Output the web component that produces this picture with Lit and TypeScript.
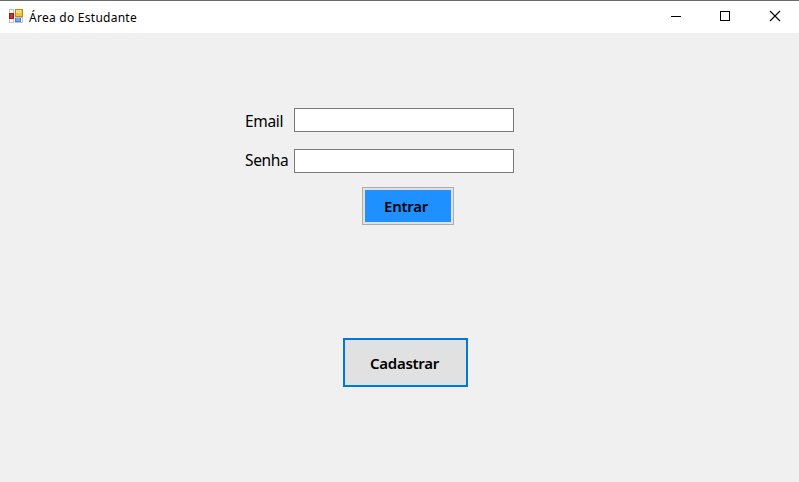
import { LitElement, html, css, svg } from "lit";
import { customElement, property } from "lit/decorators.js";

@customElement("title-bar")
class TitleBar extends LitElement {
  @property() caption = "";

  static styles = css`
    :host {
      display: flex;
      box-sizing: border-box;
      height: 33px;
      background: #fff;
      border-top: 1px solid #6b6a6c;
      color: #000;
      flex: none;
    }
    .app-icon {
      display: block;
      margin: 8px 6px 0 9px;
      flex: none;
    }
    .caption {
      flex: 1;
      font-size: 12px;
      line-height: 16px;
      padding-top: 9px;
      white-space: nowrap;
      letter-spacing: 0.26px;
    }
    .control {
      display: block;
      width: 50px;
      height: 32px;
      flex: none;
    }
  `;

  private control(shape: unknown) {
    return html`<svg class="control" viewBox="0 0 50 32" fill="none" stroke="#000">${shape}</svg>`;
  }

  render() {
    return html`
      <svg class="app-icon" width="14" height="14" viewBox="0 0 14 14" shape-rendering="crispEdges">
        <rect width="14" height="14" fill="#c2c2c4"></rect>
        <path d="M1 1h3v3H1zM1 10h3v3H1zM12 9h1v4h-1z" fill="#fff"></path>
        <rect x="5" y="0" width="1" height="14" fill="#f4f4f4"></rect>
        <rect x="0" y="4" width="5" height="6" fill="#a51212"></rect>
        <rect x="1" y="5" width="3" height="4" fill="#cf3028"></rect>
        <rect x="6" y="0" width="8" height="8" fill="#b88a20"></rect>
        <rect x="7" y="1" width="6" height="6" fill="#f4c236"></rect>
        <rect x="7" y="1" width="5" height="3" fill="#ffdc70"></rect>
        <rect x="6" y="9" width="6" height="4" fill="#4a7fd8"></rect>
        <rect x="7" y="9" width="4" height="3" fill="#74a8f0"></rect>
      </svg>
      <span class="caption">${this.caption}</span>
      ${this.control(svg`<path d="M22 15.5h10" />`)}
      ${this.control(svg`<path d="M21.5 10.5h9v9h-9z" shape-rendering="crispEdges" />`)}
      ${this.control(svg`<path d="M21 10l10 10M31 10l-10 10" stroke-width="1.1" />`)}
    `;
  }
}

@customElement("app-root")
class AppRoot extends LitElement {
  static styles = css`
    :host {
      display: flex;
      flex-direction: column;
      height: 482px;
      overflow: hidden;
      background: #f0f0f0;
      color: #000;
      font-family: "Noto Sans", "Open Sans", sans-serif;
    }
    .form {
      display: grid;
      grid-template-columns: 49px 220px;
      row-gap: 17px;
      margin: 75px 0 0 245px;
    }
    .label {
      height: 24px;
      font-size: 15.5px;
      letter-spacing: -0.35px;
      line-height: 26px;
      white-space: nowrap;
    }
    .senha {
      margin-top: -2px;
    }
    .field {
      box-sizing: border-box;
      width: 220px;
      height: 24px;
      padding: 0 3px;
      border: 1px solid #7a7a7a;
      border-radius: 0;
      outline: none;
      background: #fff;
      font: 15px "Noto Sans", sans-serif;
    }
    .button {
      box-sizing: border-box;
      border-radius: 0;
      color: #000;
      font: 600 15px "Noto Sans", "Open Sans", sans-serif;
      letter-spacing: -0.28px;
    }
    .enter {
      width: 92px;
      height: 38px;
      margin: 14px 0 0 362px;
      padding: 0 4px 0 0;
      border: 1px solid #adadad;
      background: #1e90ff;
      box-shadow: inset 0 0 0 2px #e1e1e1;
    }
    .register {
      width: 125px;
      height: 49px;
      margin: 113px 0 0 343px;
      padding: 0 2px 0 0;
      border: 2px solid #0078d7;
      background: #e1e1e1;
    }
  `;

  render() {
    return html`
      <title-bar caption="Área do Estudante"></title-bar>
      <div class="form">
        <label class="label" for="email">Email</label>
        <input class="field" id="email" type="text" />
        <label class="label senha" for="senha">Senha</label>
        <input class="field" id="senha" type="password" />
      </div>
      <button class="button enter">Entrar</button>
      <button class="button register">Cadastrar</button>
    `;
  }
}
